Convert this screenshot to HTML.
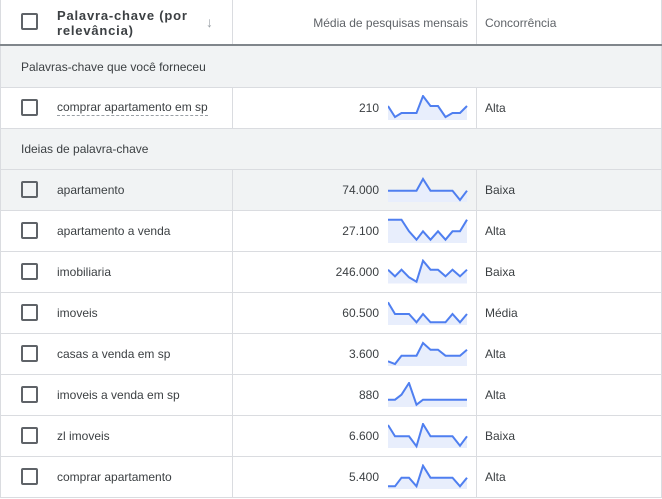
<!DOCTYPE html>
<html><head><meta charset="utf-8"><style>
*{margin:0;padding:0;box-sizing:border-box}
body{width:662px;height:499px;overflow:hidden;background:#fff;font-family:"Liberation Sans",sans-serif;font-size:12px;color:#3c4043;position:relative}
.r{position:absolute;left:0;width:662px;border-bottom:1px solid #dadce0}
.r:before{content:"";position:absolute;left:0;top:0;bottom:0;border-left:1px solid #dadce0}
.r:after{content:"";position:absolute;right:0;top:0;bottom:0;border-left:1px solid #dadce0}
.g{background:#f1f3f4}
.cb{position:absolute;left:21px;width:17px;height:17px;border:2px solid #5f6368;border-radius:2px}
.t{position:absolute;left:57px}
.n{position:absolute;right:283px;text-align:right}
.c{position:absolute;left:485px}
.v1{position:absolute;left:232px;top:0;bottom:0;border-left:1px solid #dadce0}
.v2{position:absolute;left:476px;top:0;bottom:0;border-left:1px solid #dadce0}
svg{position:absolute;left:388px}
</style></head><body>
<div class="r" style="top:0;height:46px;border-bottom:2px solid #80868b">
 <div class="cb" style="top:13px"></div>
 <div style="position:absolute;left:57px;top:8px;font-weight:bold;color:#3c4043;line-height:15px;font-size:13px;letter-spacing:0.8px">Palavra-chave (por<br>relevância)</div>
 <div style="position:absolute;left:206px;top:14px;color:#9aa0a6;font-size:14px">↓</div>
 <div class="v1"></div><div class="v2"></div>
 <div style="position:absolute;right:194px;top:16px;color:#5f6368">Média de pesquisas mensais</div>
 <div style="position:absolute;left:485px;top:16px;color:#5f6368">Concorrência</div>
</div>
<div class="r g" style="top:46px;height:42px"><div style="position:absolute;left:21px;top:14px">Palavras-chave que você forneceu</div></div>
<div class="r" style="top:88px;height:41px">
 <div class="cb" style="top:11px"></div><div class="t" style="top:11px;border-bottom:1px dashed #9aa0a6;line-height:16px">comprar apartamento em sp</div>
 <div class="v1"></div><div class="v2"></div>
 <div class="n" style="top:13px">210</div><div class="c" style="top:13px">Alta</div>
 <svg style="top:7px" width="82" height="26"><polygon fill="#e8eefc" points="0,11 7,22 13.5,18 21,18 28.5,18 35,1 42.5,11 50,11 57.5,22 64.5,18 72,18 79,11 79,25 0,25"/><polyline fill="none" stroke="#4f7ff0" stroke-width="2" points="0,11 7,22 13.5,18 21,18 28.5,18 35,1 42.5,11 50,11 57.5,22 64.5,18 72,18 79,11"/></svg>
</div>
<div class="r g" style="top:129px;height:41px"><div style="position:absolute;left:21px;top:13px">Ideias de palavra-chave</div></div>

<div class="r g" style="top:170px;height:41px"><div class="cb" style="top:11px"></div><div class="t" style="top:13px">apartamento</div><div class="v1"></div><div class="v2"></div><div class="n" style="top:13px">74.000</div><div class="c" style="top:13px">Baixa</div>
<svg style="top:7px" width="82" height="26"><polygon fill="#e8eefc" points="0,13.7 7,13.7 13.5,13.7 21,13.7 28.5,13.7 35,2 42.5,13.7 50,13.7 57.5,13.7 64.5,13.7 72,23 79,13.7 79,25 0,25"/><polyline fill="none" stroke="#4f7ff0" stroke-width="2" points="0,13.7 7,13.7 13.5,13.7 21,13.7 28.5,13.7 35,2 42.5,13.7 50,13.7 57.5,13.7 64.5,13.7 72,23 79,13.7"/></svg></div>

<div class="r" style="top:211px;height:41px"><div class="cb" style="top:11px"></div><div class="t" style="top:13px">apartamento a venda</div><div class="v1"></div><div class="v2"></div><div class="n" style="top:13px">27.100</div><div class="c" style="top:13px">Alta</div>
<svg style="top:7px" width="82" height="26"><polygon fill="#e8eefc" points="0,1.7 7,1.7 13.5,1.7 21,13.3 28.5,21.7 35,13.3 42.5,21.7 50,13.3 57.5,21.7 64.5,13.3 72,13.3 79,1.7 79,25 0,25"/><polyline fill="none" stroke="#4f7ff0" stroke-width="2" points="0,1.7 7,1.7 13.5,1.7 21,13.3 28.5,21.7 35,13.3 42.5,21.7 50,13.3 57.5,21.7 64.5,13.3 72,13.3 79,1.7"/></svg></div>

<div class="r" style="top:252px;height:41px"><div class="cb" style="top:11px"></div><div class="t" style="top:13px">imobiliaria</div><div class="v1"></div><div class="v2"></div><div class="n" style="top:13px">246.000</div><div class="c" style="top:13px">Baixa</div>
<svg style="top:7px" width="82" height="26"><polygon fill="#e8eefc" points="0,10.7 7,17.3 13.5,10.7 21,18.3 28.5,22.7 35,1.7 42.5,10.7 50,10.7 57.5,17.3 64.5,10.7 72,17.3 79,10.7 79,24.5 0,24.5"/><polyline fill="none" stroke="#4f7ff0" stroke-width="2" points="0,10.7 7,17.3 13.5,10.7 21,18.3 28.5,22.7 35,1.7 42.5,10.7 50,10.7 57.5,17.3 64.5,10.7 72,17.3 79,10.7"/></svg></div>

<div class="r" style="top:293px;height:41px"><div class="cb" style="top:11px"></div><div class="t" style="top:13px">imoveis</div><div class="v1"></div><div class="v2"></div><div class="n" style="top:13px">60.500</div><div class="c" style="top:13px">Média</div>
<svg style="top:7px" width="82" height="26"><polygon fill="#e8eefc" points="0,2.3 7,14 13.5,14 21,14 28.5,22.3 35,14 42.5,22.3 50,22.3 57.5,22.3 64.5,14 72,22.3 79,14 79,25 0,25"/><polyline fill="none" stroke="#4f7ff0" stroke-width="2" points="0,2.3 7,14 13.5,14 21,14 28.5,22.3 35,14 42.5,22.3 50,22.3 57.5,22.3 64.5,14 72,22.3 79,14"/></svg></div>

<div class="r" style="top:334px;height:41px"><div class="cb" style="top:11px"></div><div class="t" style="top:13px">casas a venda em sp</div><div class="v1"></div><div class="v2"></div><div class="n" style="top:13px">3.600</div><div class="c" style="top:13px">Alta</div>
<svg style="top:7px" width="82" height="26"><polygon fill="#e8eefc" points="0,20.3 7,23 13.5,14.7 21,14.7 28.5,14.7 35,2 42.5,8.7 50,8.7 57.5,14.7 64.5,14.7 72,14.7 79,8.7 79,25 0,25"/><polyline fill="none" stroke="#4f7ff0" stroke-width="2" points="0,20.3 7,23 13.5,14.7 21,14.7 28.5,14.7 35,2 42.5,8.7 50,8.7 57.5,14.7 64.5,14.7 72,14.7 79,8.7"/></svg></div>

<div class="r" style="top:375px;height:41px"><div class="cb" style="top:11px"></div><div class="t" style="top:13px">imoveis a venda em sp</div><div class="v1"></div><div class="v2"></div><div class="n" style="top:13px">880</div><div class="c" style="top:13px">Alta</div>
<svg style="top:7px" width="82" height="26"><polygon fill="#e8eefc" points="0,17.7 7,17.7 13.5,12.7 21,1 28.5,22.7 35,17.7 42.5,17.7 50,17.7 57.5,17.7 64.5,17.7 72,17.7 79,17.7 79,25 0,25"/><polyline fill="none" stroke="#4f7ff0" stroke-width="2" points="0,17.7 7,17.7 13.5,12.7 21,1 28.5,22.7 35,17.7 42.5,17.7 50,17.7 57.5,17.7 64.5,17.7 72,17.7 79,17.7"/></svg></div>

<div class="r" style="top:416px;height:41px"><div class="cb" style="top:11px"></div><div class="t" style="top:13px">zl imoveis</div><div class="v1"></div><div class="v2"></div><div class="n" style="top:13px">6.600</div><div class="c" style="top:13px">Baixa</div>
<svg style="top:7px" width="82" height="26"><polygon fill="#e8eefc" points="0,2 7,13.3 13.5,13.3 21,13.3 28.5,23.3 35,1 42.5,13.3 50,13.3 57.5,13.3 64.5,13.3 72,22.7 79,13.3 79,25 0,25"/><polyline fill="none" stroke="#4f7ff0" stroke-width="2" points="0,2 7,13.3 13.5,13.3 21,13.3 28.5,23.3 35,1 42.5,13.3 50,13.3 57.5,13.3 64.5,13.3 72,22.7 79,13.3"/></svg></div>

<div class="r" style="top:457px;height:41px"><div class="cb" style="top:11px"></div><div class="t" style="top:13px">comprar apartamento</div><div class="v1"></div><div class="v2"></div><div class="n" style="top:13px">5.400</div><div class="c" style="top:13px">Alta</div>
<svg style="top:7px" width="82" height="26"><polygon fill="#e8eefc" points="0,22.3 7,22.3 13.5,13.7 21,13.7 28.5,22.3 35,1.7 42.5,13.7 50,13.7 57.5,13.7 64.5,13.7 72,22.3 79,13.7 79,25 0,25"/><polyline fill="none" stroke="#4f7ff0" stroke-width="2" points="0,22.3 7,22.3 13.5,13.7 21,13.7 28.5,22.3 35,1.7 42.5,13.7 50,13.7 57.5,13.7 64.5,13.7 72,22.3 79,13.7"/></svg></div>
</body></html>
